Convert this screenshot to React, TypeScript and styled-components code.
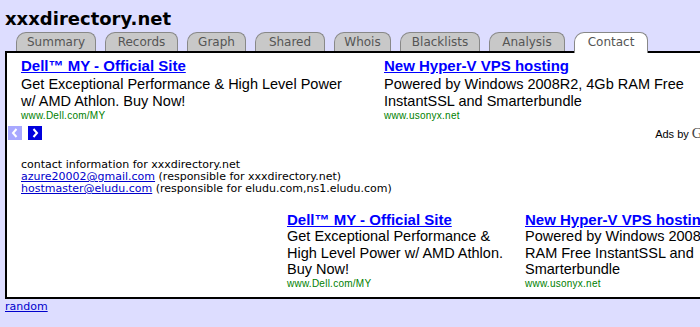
import styled, { createGlobalStyle } from "styled-components";

const GlobalStyle = createGlobalStyle`
    html, body {
        margin: 0;
        padding: 0;
        background: #ddddff;
        overflow: hidden;
    }
    body {
        font-family: "DejaVu Sans", Verdana, sans-serif;
    }
`;

type Ad = { title: string; text: string; url: string };

const ads: Ad[] = [
    {
        title: "Dell™ MY - Official Site",
        text: "Get Exceptional Performance & High Level Power w/ AMD Athlon. Buy Now!",
        url: "www.Dell.com/MY",
    },
    {
        title: "New Hyper-V VPS hosting",
        text: "Powered by Windows 2008R2, 4Gb RAM Free InstantSSL and Smarterbundle",
        url: "www.usonyx.net",
    },
];

// tab label + width in px (matches the old Verdana rendering)
const tabs: [string, number][] = [
    ["Summary", 80],
    ["Records", 73],
    ["Graph", 59],
    ["Shared", 70],
    ["Whois", 57],
    ["Blacklists", 80],
    ["Analysis", 76],
    ["Contact", 74],
];

const App = () => {
    return (
        <Page>
            <GlobalStyle />
            <Title>xxxdirectory.net</Title>
            <TabBar>
                {tabs.map(([t, w]) => (
                    <Tab key={t} $active={t === "Contact"} $width={w}>
                        {t}
                    </Tab>
                ))}
            </TabBar>
            <Panel>
                <TopAds>
                    {ads.map((ad) => (
                        <AdItem key={ad.url}>
                            <AdTitle href="#">{ad.title}</AdTitle>
                            <AdText>{ad.text}</AdText>
                            <AdUrl>{ad.url}</AdUrl>
                        </AdItem>
                    ))}
                </TopAds>
                <NavRow>
                    <NavButton $enabled={false}>
                        <svg width="14" height="14" viewBox="0 0 14 14">
                            <path d="M8.5 3 L5 7 L8.5 11" fill="none" stroke="#fff" strokeWidth="2" />
                        </svg>
                    </NavButton>
                    <NavButton $enabled>
                        <svg width="14" height="14" viewBox="0 0 14 14">
                            <path d="M5.5 3 L9 7 L5.5 11" fill="none" stroke="#fff" strokeWidth="2" />
                        </svg>
                    </NavButton>
                    <AdsBy>
                        Ads by <GoogleG>Google</GoogleG>
                    </AdsBy>
                </NavRow>
                <Contact>
                    <div>contact information for xxxdirectory.net</div>
                    <div>
                        <MailLink href="#">azure20002@gmail.com</MailLink> (responsible for xxxdirectory.net)
                    </div>
                    <div>
                        <MailLink href="#">hostmaster@eludu.com</MailLink> (responsible for eludu.com,ns1.eludu.com)
                    </div>
                </Contact>
                <BottomAds>
                    {ads.map((ad) => (
                        <AdItem key={ad.url} $compact>
                            <AdTitle href="#">{ad.title}</AdTitle>
                            <AdText $compact>{ad.text}</AdText>
                            <AdUrl>{ad.url}</AdUrl>
                        </AdItem>
                    ))}
                </BottomAds>
            </Panel>
            <Random href="#">random</Random>
        </Page>
    );
};

export default App;

const Page = styled.div`
    padding: 8px 0 0 5px;
    width: 800px;
`;

const Title = styled.h1`
    margin: 0;
    font-family: "DejaVu Sans", Verdana, sans-serif;
    font-weight: 700;
    font-size: 18px;
    line-height: 21px;
    color: #000;
`;

const TabBar = styled.div`
    display: flex;
    gap: 9px;
    margin: 3px 0 0 11px;
    align-items: flex-end;
    position: relative;
    z-index: 1;
`;

const Tab = styled.div<{ $active?: boolean; $width: number }>`
    box-sizing: border-box;
    width: ${(p) => p.$width}px;
    text-align: center;
    font-size: 12px;
    line-height: 18px;
    color: #555;
    padding-bottom: ${(p) => (p.$active ? "2px" : "0")};
    margin-bottom: ${(p) => (p.$active ? "-2px" : "0")};
    background: ${(p) => (p.$active ? "#fff" : "#c8c8c8")};
    border: 1px solid #888;
    border-bottom: none;
    border-radius: 10px 8px 0 0;
`;

const Panel = styled.div`
    width: 760px;
    height: 240px;
    border: 2px solid #000;
    background: #fff;
    padding-top: 4px;
    box-sizing: content-box;
`;

const TopAds = styled.div`
    display: grid;
    grid-template-columns: 363px 360px;
    padding-left: 14px;
`;

const AdItem = styled.div<{ $compact?: boolean }>`
    font-family: "Liberation Sans", Arial, sans-serif;
    padding-right: ${(p) => (p.$compact ? "8px" : "24px")};
`;

const AdTitle = styled.a`
    display: block;
    font-size: 15px;
    font-weight: 700;
    line-height: 17px;
    color: #0000ff;
    text-decoration: underline;
`;

const AdText = styled.div<{ $compact?: boolean }>`
    font-size: 14.5px;
    line-height: ${(p) => (p.$compact ? "16.5px" : "17px")};
    color: #000;
    margin-top: ${(p) => (p.$compact ? "0" : "2px")};
`;

const AdUrl = styled.div`
    font-size: 10px;
    letter-spacing: 0.25px;
    line-height: 12px;
    color: #008000;
`;

const NavRow = styled.div`
    display: flex;
    align-items: center;
    gap: 6px;
    margin-top: 4px;
    padding-left: 1px;
    width: 728px;
    height: 14px;
`;

const NavButton = styled.span<{ $enabled?: boolean }>`
    display: flex;
    width: 14px;
    height: 14px;
    background: ${(p) => (p.$enabled ? "#0000dd" : "#a8a8ff")};
`;

const AdsBy = styled.span`
    margin-left: auto;
    font-family: "Liberation Sans", Arial, sans-serif;
    font-size: 11px;
    color: #000;
`;

const GoogleG = styled.span`
    font-family: "Liberation Serif", "Times New Roman", serif;
    font-size: 15px;
    color: #444;
`;

const Contact = styled.div`
    margin-top: 19px;
    padding-left: 14px;
    font-size: 11px;
    line-height: 12px;
    color: #000;
`;

const MailLink = styled.a`
    color: #0000cc;
    text-decoration: underline;
`;

const BottomAds = styled.div`
    display: grid;
    grid-template-columns: 238px 238px;
    margin-top: 16px;
    padding-left: 280px;
`;

const Random = styled.a`
    display: block;
    width: fit-content;
    margin-top: 1px;
    font-size: 11px;
    line-height: 13px;
    color: #0000cc;
    text-decoration: underline;
`;
